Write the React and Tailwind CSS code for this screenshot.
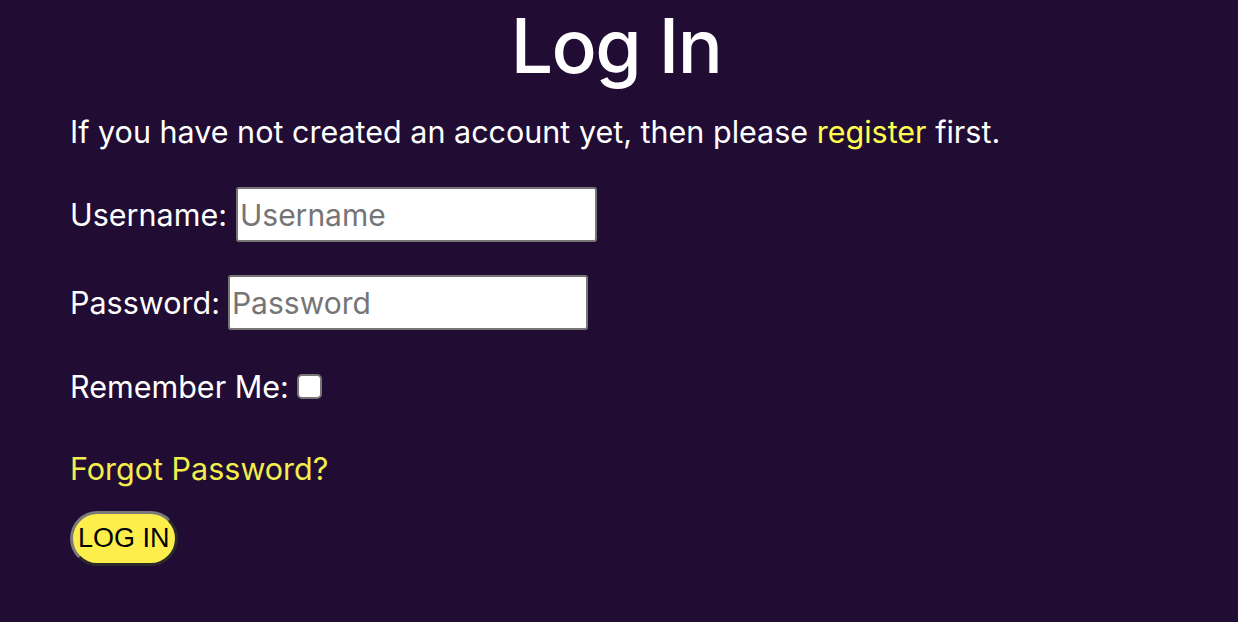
export default function App() {
  return (
    <div
      className="min-h-screen bg-[#210c33] text-white px-[70px]"
      style={{ fontFamily: "Inter, 'Noto Sans', sans-serif" }}
    >
      <h1 className="text-center text-[75px] font-medium leading-[92px] tracking-[-1.5px] pr-[6px]">
        Log In
      </h1>

      <p className="mt-[22px] text-[30.5px] leading-[36px]">
        If you have not created an account yet, then please{" "}
        <a href="#" className="text-[#ffff4d]">
          register
        </a>{" "}
        first.
      </p>

      <form className="mt-[37px] flex flex-col items-start text-[30.5px]">
        <div className="flex items-center gap-[9px]">
          <label htmlFor="username">Username:</label>
          <input
            id="username"
            type="text"
            placeholder="Username"
            className="w-[361px] h-[55px] bg-white text-black placeholder-[#757575] rounded-[3px] border-2 border-[#767676] px-[2px] text-[30px] outline-none"
          />
        </div>

        <div className="mt-[33px] flex items-center gap-[8px]">
          <label htmlFor="password">Password:</label>
          <input
            id="password"
            type="password"
            placeholder="Password"
            className="w-[360px] h-[55px] bg-white text-black placeholder-[#757575] rounded-[3px] border-2 border-[#767676] px-[2px] text-[30px] outline-none"
          />
        </div>

        <div className="mt-[39px] flex items-center gap-[8px] leading-[36px]">
          <label htmlFor="remember">Remember Me:</label>
          <input
            id="remember"
            type="checkbox"
            className="appearance-none w-[25px] h-[25px] bg-white rounded-[5px] border-2 border-[#767676] mb-[2px]"
          />
        </div>

        <a href="#" className="mt-[46px] text-[#f2ee4e] leading-[36px]">
          Forgot Password?
        </a>

        <button
          type="button"
          className="mt-[24px] h-[55px] px-[5px] rounded-full bg-[#fdee4c] text-black text-[27px] border-[3px] border-t-[#7a7a7a] border-l-[#7a7a7a] border-b-[#2a2a2a] border-r-[#2a2a2a]"
          style={{ fontFamily: "'Liberation Sans', Arial, sans-serif" }}
        >
          LOG IN
        </button>
      </form>
    </div>
  );
}
